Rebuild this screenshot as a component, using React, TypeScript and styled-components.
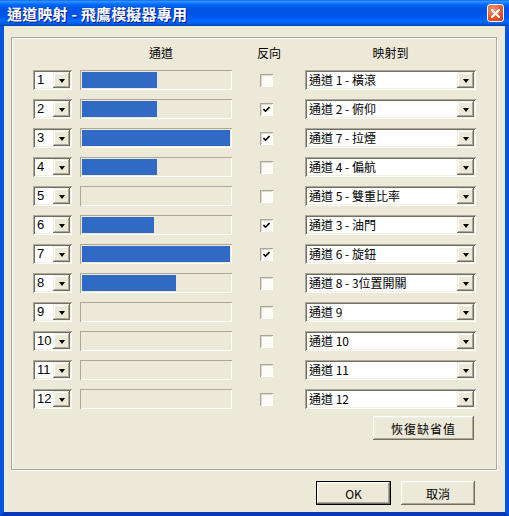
import * as React from "react";
import styled, { createGlobalStyle } from "styled-components";

const GlobalStyle = createGlobalStyle`
  *, *::before, *::after {
    box-sizing: border-box;
  }
  html, body {
    margin: 0;
    padding: 0;
    background: #ece9d8;
  }
`;

const UI_FONT = `"Liberation Sans", "Noto Sans CJK TC", sans-serif`;
const CJK_FONT = `"Noto Sans CJK TC", "Liberation Sans", sans-serif`;

const Window = styled.div`
  width: 509px;
  height: 516px;
  display: flex;
  flex-direction: column;
  font-family: ${CJK_FONT};
  font-size: 12px;
  color: #000;
  overflow: hidden;
`;

const TitleBar = styled.div`
  height: 26px;
  flex: none;
  display: flex;
  align-items: center;
  padding: 0 5px 0 7px;
  background: linear-gradient(
    180deg,
    #0058ee 0%,
    #3593ff 4%,
    #288eff 8%,
    #127dff 12%,
    #036ffc 16%,
    #0262ee 22%,
    #0057e5 30%,
    #0054e3 40%,
    #0055eb 60%,
    #005bf5 70%,
    #026afe 80%,
    #0062ef 88%,
    #0052d6 94%,
    #0040ab 100%
  );
`;

const Title = styled.div`
  flex: 1;
  color: #fff;
  font-family: ${CJK_FONT};
  font-weight: bold;
  font-size: 15px;
  letter-spacing: 0.2px;
  text-shadow: 1px 1px 0 #0a1883;
  white-space: nowrap;
`;

const CloseButton = styled.div`
  width: 17px;
  height: 18px;
  border: 1px solid #fff;
  border-radius: 3px;
  background: radial-gradient(circle at 35% 30%, #f09a7c 0%, #e3582f 55%, #c23a14 100%);
  display: flex;
  align-items: center;
  justify-content: center;
`;

const Frame = styled.div`
  flex: 1;
  min-height: 0;
  display: flex;
  flex-direction: column;
  border-left: 4px solid #0855dd;
  border-right: 4px solid #0855dd;
  border-bottom: 4px solid #0838b8;
  background: #ece9d8;
  padding: 11px 8px 7px 7px;
`;

const GroupBox = styled.div`
  height: 433px;
  flex: none;
  border: 1px solid #aca899;
  box-shadow: 1px 1px 0 #fff, inset 1px 1px 0 #fff;
  padding: 8px 21px 0 21px;
  display: flex;
  flex-direction: column;
`;

const Grid = styled.div`
  display: grid;
  grid-template-columns: 47px 180px 45px 171px;
  grid-template-rows: 15px;
  grid-auto-rows: 20px;
  row-gap: 9px;
  align-items: center;
`;

const HeaderCell = styled.div<{ $shift?: number; $left?: boolean }>`
  height: 15px;
  line-height: 14px;
  text-align: ${(p) => (p.$left ? "left" : "center")};
  margin-left: ${(p) => (p.$left ? -3 : 0)}px;
  padding-right: ${(p) => (p.$shift ? p.$shift : 0)}px;
`;

const HeaderSpacer = styled.div``;

const Combo = styled.div<{ $width: number }>`
  width: ${(p) => p.$width}px;
  height: 20px;
  background: #fff;
  box-shadow: inset 1px 1px 0 #aca899, inset -1px -1px 0 #fff,
    inset 2px 2px 0 #716f64, inset -2px -2px 0 #f1efe2;
  display: flex;
  align-items: center;
  padding: 2px;
`;

const ComboText = styled.div<{ $latin?: boolean }>`
  flex: 1;
  padding-left: 2px;
  font-family: ${(p) => (p.$latin ? UI_FONT : CJK_FONT)};
  font-size: ${(p) => (p.$latin ? 13 : 12)}px;
  line-height: 16px;
  white-space: nowrap;
  overflow: hidden;
`;

const DropButton = styled.div`
  width: 17px;
  height: 16px;
  background: #ece9d8;
  box-shadow: inset -1px -1px 0 #716f64, inset 1px 1px 0 #f1efe2,
    inset -2px -2px 0 #aca899, inset 2px 2px 0 #fff;
  display: flex;
  align-items: center;
  justify-content: center;
`;

const Arrow = styled.div`
  width: 0;
  height: 0;
  margin-top: 1px;
  border-left: 3.5px solid transparent;
  border-right: 3.5px solid transparent;
  border-top: 4px solid #000;
`;

const Progress = styled.div`
  width: 152px;
  height: 20px;
  padding: 2px;
  box-shadow: inset 1px 1px 0 #aca899, inset -1px -1px 0 #fff;
  display: flex;
`;

const ProgressFill = styled.div`
  height: 100%;
  background: #316ac5;
`;

const CheckBox = styled.div`
  width: 13px;
  height: 13px;
  background: #fbfbf8;
  box-shadow: inset 1px 1px 0 #a7a59a, inset -1px -1px 0 #fff,
    inset 2px 2px 0 #dedcd0;
  display: flex;
  align-items: center;
  justify-content: center;
`;

const RestoreRow = styled.div`
  display: flex;
  justify-content: flex-end;
  margin-top: 7px;
  padding-right: 1px;
`;

const Button = styled.button<{ $default?: boolean }>`
  width: ${(p) => (p.$default ? 75 : 74)}px;
  height: 24px;
  padding: 0;
  font-family: ${CJK_FONT};
  font-size: 12px;
  color: #000;
  background: #ece9d8;
  border: ${(p) => (p.$default ? "1px solid #000" : "none")};
  box-shadow: inset -1px -1px 0 #716f64, inset 1px 1px 0 #fff,
    inset -2px -2px 0 #aca899, inset 2px 2px 0 #f1efe2;
  cursor: default;
`;

const WideButton = styled(Button)`
  width: 101px;
  letter-spacing: 1px;
`;

const Footer = styled.div`
  display: flex;
  justify-content: flex-end;
  gap: 10px;
  margin-top: 11px;
  padding-right: 22px;
`;

type Channel = {
  fill: number;
  reverse: boolean;
  target: string;
};

const channels: Channel[] = [
  { fill: 75, reverse: false, target: "通道 1 - 橫滾" },
  { fill: 75, reverse: true, target: "通道 2 - 俯仰" },
  { fill: 148, reverse: true, target: "通道 7 - 拉煙" },
  { fill: 75, reverse: false, target: "通道 4 - 偏航" },
  { fill: 0, reverse: false, target: "通道 5 - 雙重比率" },
  { fill: 72, reverse: true, target: "通道 3 - 油門" },
  { fill: 148, reverse: true, target: "通道 6 - 旋鈕" },
  { fill: 94, reverse: false, target: "通道 8 - 3位置開關" },
  { fill: 0, reverse: false, target: "通道 9" },
  { fill: 0, reverse: false, target: "通道 10" },
  { fill: 0, reverse: false, target: "通道 11" },
  { fill: 0, reverse: false, target: "通道 12" },
];

const CloseGlyph = () => (
  <svg width="9" height="9" viewBox="0 0 9 9">
    <path d="M1 1 L8 8 M8 1 L1 8" stroke="#fff" strokeWidth="2" strokeLinecap="square" />
  </svg>
);

const CheckGlyph = () => (
  <svg width="7" height="7" viewBox="0 0 7 7">
    <path d="M0.5 3 L2.5 5.2 L6.5 1" stroke="#000" strokeWidth="1.6" fill="none" />
  </svg>
);

export default function App() {
  return (
    <>
      <GlobalStyle />
      <Window>
        <TitleBar>
          <Title>通道映射 - 飛鷹模擬器專用</Title>
          <CloseButton>
            <CloseGlyph />
          </CloseButton>
        </TitleBar>
        <Frame>
          <GroupBox>
            <Grid>
              <HeaderSpacer />
              <HeaderCell $shift={18}>通道</HeaderCell>
              <HeaderCell $left>反向</HeaderCell>
              <HeaderCell>映射到</HeaderCell>
              {channels.map((ch, i) => (
                <React.Fragment key={i}>
                  <Combo $width={39}>
                    <ComboText $latin>{i + 1}</ComboText>
                    <DropButton>
                      <Arrow />
                    </DropButton>
                  </Combo>
                  <Progress>
                    {ch.fill > 0 && <ProgressFill style={{ width: ch.fill }} />}
                  </Progress>
                  <CheckBox>{ch.reverse && <CheckGlyph />}</CheckBox>
                  <Combo $width={171}>
                    <ComboText>{ch.target}</ComboText>
                    <DropButton>
                      <Arrow />
                    </DropButton>
                  </Combo>
                </React.Fragment>
              ))}
            </Grid>
            <RestoreRow>
              <WideButton>恢復缺省值</WideButton>
            </RestoreRow>
          </GroupBox>
          <Footer>
            <Button $default>OK</Button>
            <Button>取消</Button>
          </Footer>
        </Frame>
      </Window>
    </>
  );
}
